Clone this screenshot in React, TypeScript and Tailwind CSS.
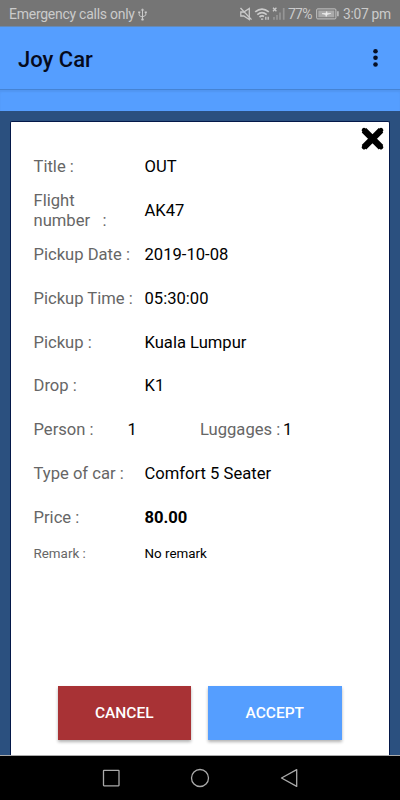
import type { ReactNode } from "react";

function StatusBar() {
  return (
    <header className="flex h-[26px] shrink-0 items-center bg-[#757575] pt-[2px] pl-[9px] text-[14px] text-[#cbcbcb]">
      <span className="w-[125px] whitespace-nowrap tracking-[-0.26px]">Emergency calls only</span>
      <svg className="ml-[4px] h-[13px] w-[9px]" viewBox="0 0 9 13" fill="none" stroke="#cbcbcb" strokeWidth="1">
        <path d="M4.5 1.5v10M1.2 4.5v2.3q0 1 1 1.3l2.3 1M7.8 4.5v2q0 1-1 1.3l-2.3 1M3.3 2.5l1.2-1.7 1.2 1.7" />
        <circle cx="4.5" cy="11.4" r="1.2" fill="#cbcbcb" stroke="none" />
        <path d="M.2 4.2h2.1M6.7 4.2h2.1" strokeWidth="1.5" />
      </svg>
      <svg className="ml-auto h-[14px] w-[47px] shrink-0" viewBox="0 0 47 14" fill="none" stroke="#cbcbcb" strokeWidth="1.3">
        <path d="M1.8 5h3l5.5-3.5v11L4.8 9H1.8z" />
        <path d="M1.5 1l11 11.6" />
        <path d="M16.2 4.9q6.8-5.6 13.6 0M18.3 7.6q4.7-3.8 9.4 0M20.5 10q2.5-2 4.5-.5" strokeWidth="1.7" />
        <path d="M22 12.2h2.2M26.8 9.8v3M29.2 9.8v3" strokeWidth="1.3" />
        <path d="M34 .8l3.4 3.4M37.4.8L34 4.2" />
        <path d="M35 12.8V10M38 12.8V8M41 12.8V5.5M44.7 12.8V1" stroke="#969696" strokeWidth="1.7" />
      </svg>
      <span className="ml-[2px] w-[25px] text-[14px] tracking-[-0.75px]">77%</span>
      <svg className="ml-[3px] h-[12px] w-[23px] shrink-0" viewBox="0 0 23 12">
        <rect x=".7" y=".9" width="19.2" height="10" rx="1" fill="none" stroke="#c5c5c5" />
        <rect x="2.3" y="2.5" width="16" height="6.8" fill="#aaa" />
        <path d="M21.9 3.3v5" stroke="#c5c5c5" strokeWidth="1.5" />
        <path d="M6 5.6l4-.2.7-2 .6 2h3.5L11 6.5l-.8 2.1-.6-2z" fill="#f0f0f0" stroke="#f0f0f0" strokeWidth=".6" />
      </svg>
      <span className="ml-[4px] w-[57px] whitespace-nowrap text-[13.8px] tracking-[-0.3px]">3:07 pm</span>
    </header>
  );
}

function Row({ label, children }: { label: ReactNode; children: ReactNode }) {
  return (
    <div className="flex h-[43.8px] items-center">
      <div className="w-[111px] shrink-0 text-[#666]">{label}</div>
      <div className="whitespace-nowrap">{children}</div>
    </div>
  );
}

function NavigationBar() {
  return (
    <nav className="flex h-[45px] shrink-0 items-center justify-center gap-[69px] border-t border-[#aaa] bg-black">
      <svg className="size-5" viewBox="0 0 20 20" fill="none" stroke="#aaa" strokeWidth="1.3">
        <rect x="2.5" y="2.3" width="15.5" height="15.5" rx=".5" />
      </svg>
      <svg className="size-5" viewBox="0 0 20 20" fill="none" stroke="#aaa" strokeWidth="1.3">
        <circle cx="10" cy="10" r="8.5" />
      </svg>
      <svg className="size-5" viewBox="0 0 20 20" fill="none" stroke="#aaa" strokeWidth="1.3" strokeLinejoin="round">
        <path d="M17.7 1.6v16.8L2.5 10z" />
      </svg>
    </nav>
  );
}

export default function App() {
  return (
    <div className="flex h-[800px] w-[400px] flex-col overflow-hidden bg-[#2b507f] font-['Roboto',sans-serif]">
      <StatusBar />
      <div className="flex h-[63px] shrink-0 items-center justify-between border-t border-[#668ab5] bg-[#559eff] pr-[22px] pl-[18px]">
        <h1 className="pt-[2px] text-[22px] font-medium text-[#050a1c]">Joy Car</h1>
        <svg className="h-[20px] w-[5px]" viewBox="0 0 5 20" fill="#071025">
          <circle cx="2.5" cy="3.2" r="2.3" />
          <circle cx="2.5" cy="9.8" r="2.3" />
          <circle cx="2.5" cy="16.5" r="2.3" />
        </svg>
      </div>
      <div className="h-[22px] shrink-0 border-t border-[#4583d4] bg-[#559eff] shadow-[inset_0_2px_2px_rgba(0,0,0,0.06)]" />
      <main className="mx-[10px] mt-[10px] flex min-h-0 flex-1 flex-col rounded-t-[2px] border border-b-0 border-[#041849] bg-white text-[16.6px] leading-[19.5px] text-black">
        <div className="flex h-[23.2px] shrink-0 justify-end pr-[4px]">
          <svg className="mt-[4px] h-[25px] w-[25px] shrink-0" viewBox="0 0 25 25">
            <path d="M4 4.2l17 17M21 4.2l-17 17" stroke="#000" strokeWidth="6.4" />
            <path d="M4 4.2l17 17M21 4.2l-17 17" stroke="#000" strokeWidth="4.6" strokeLinecap="round" />
          </svg>
        </div>
        <section className="pl-[22.5px]">
          <Row label="Title :">OUT</Row>
          <Row label={<>Flight<br /><span className="whitespace-pre">number   :</span></>}>AK47</Row>
          <Row label="Pickup Date :">2019-10-08</Row>
          <Row label="Pickup Time :">05:30:00</Row>
          <Row label="Pickup :">Kuala Lumpur</Row>
          <Row label="Drop :">K1</Row>
          <div className="flex h-[43.8px] items-center">
            <span className="w-[94px] text-[#666]">Person :</span>
            <span className="w-[72.5px]">1</span>
            <span className="w-[83px] whitespace-nowrap text-[#666]">Luggages :</span>
            <span>1</span>
          </div>
          <Row label="Type of car :">Comfort 5 Seater</Row>
          <Row label="Price :"><b>80.00</b></Row>
          <div className="flex h-[29px] items-center text-[13.4px]">
            <span className="w-[111px] text-[#666]">Remark :</span>
            <span>No remark</span>
          </div>
        </section>
        <div className="mt-auto mb-[15px] flex justify-center gap-[17px] pr-[1px] text-[15.5px] font-medium text-white">
          <button className="h-[54px] w-[133.5px] bg-[#a83235] pt-[2px] shadow-[0_2px_3px_rgba(0,0,0,0.3)]">CANCEL</button>
          <button className="h-[54px] w-[133.5px] bg-[#559eff] pt-[2px] shadow-[0_2px_3px_rgba(0,0,0,0.3)]">ACCEPT</button>
        </div>
      </main>
      <NavigationBar />
    </div>
  );
}
